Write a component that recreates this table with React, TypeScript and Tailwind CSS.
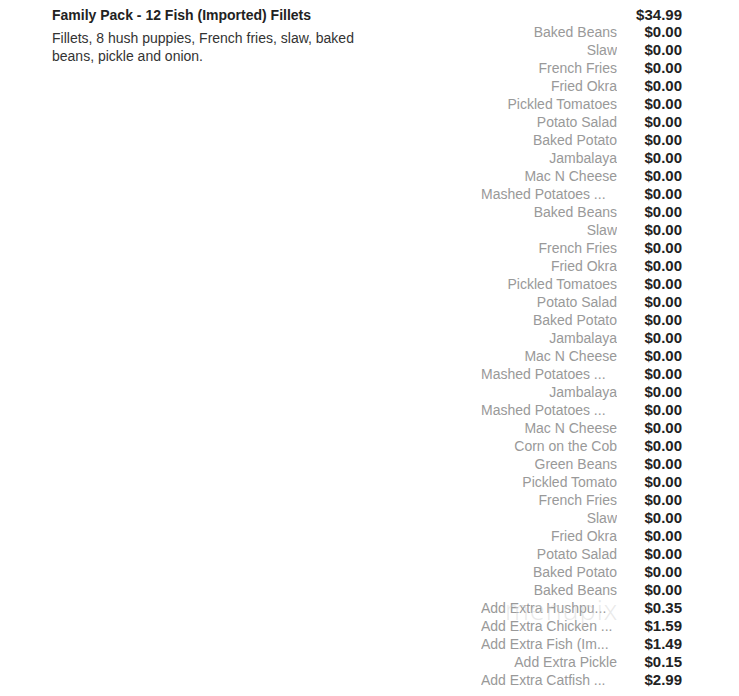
const options: { name: string; price: string; cut?: boolean }[] = [
  { name: "Baked Beans", price: "$0.00" },
  { name: "Slaw", price: "$0.00" },
  { name: "French Fries", price: "$0.00" },
  { name: "Fried Okra", price: "$0.00" },
  { name: "Pickled Tomatoes", price: "$0.00" },
  { name: "Potato Salad", price: "$0.00" },
  { name: "Baked Potato", price: "$0.00" },
  { name: "Jambalaya", price: "$0.00" },
  { name: "Mac N Cheese", price: "$0.00" },
  { name: "Mashed Potatoes ...", price: "$0.00", cut: true },
  { name: "Baked Beans", price: "$0.00" },
  { name: "Slaw", price: "$0.00" },
  { name: "French Fries", price: "$0.00" },
  { name: "Fried Okra", price: "$0.00" },
  { name: "Pickled Tomatoes", price: "$0.00" },
  { name: "Potato Salad", price: "$0.00" },
  { name: "Baked Potato", price: "$0.00" },
  { name: "Jambalaya", price: "$0.00" },
  { name: "Mac N Cheese", price: "$0.00" },
  { name: "Mashed Potatoes ...", price: "$0.00", cut: true },
  { name: "Jambalaya", price: "$0.00" },
  { name: "Mashed Potatoes ...", price: "$0.00", cut: true },
  { name: "Mac N Cheese", price: "$0.00" },
  { name: "Corn on the Cob", price: "$0.00" },
  { name: "Green Beans", price: "$0.00" },
  { name: "Pickled Tomato", price: "$0.00" },
  { name: "French Fries", price: "$0.00" },
  { name: "Slaw", price: "$0.00" },
  { name: "Fried Okra", price: "$0.00" },
  { name: "Potato Salad", price: "$0.00" },
  { name: "Baked Potato", price: "$0.00" },
  { name: "Baked Beans", price: "$0.00" },
  { name: "Add Extra Hushpu...", price: "$0.35", cut: true },
  { name: "Add Extra Chicken ...", price: "$1.59", cut: true },
  { name: "Add Extra Fish (Im...", price: "$1.49", cut: true },
  { name: "Add Extra Pickle", price: "$0.15" },
  { name: "Add Extra Catfish ...", price: "$2.99", cut: true },
];

export default function App() {
  return (
    <div className="h-[696px] w-[739px] overflow-hidden bg-white font-['Liberation_Sans',Arial,sans-serif]">
      <div className="relative flex w-[682px] justify-between pl-[52px] pt-[6px]">
        <div className="w-[310px]">
          <h3 className="text-[14px] font-bold leading-[18px] text-[#222]">Family Pack - 12 Fish (Imported) Fillets</h3>
          <p className="mt-[5px] text-[14px] leading-[18px] text-[#333]">
            Fillets, 8 hush puppies, French fries, slaw, baked beans, pickle and onion.
          </p>
        </div>
        <div className="flex flex-col">
          <div className="flex h-[17px] items-center justify-end">
            <span className="text-[15px] font-bold leading-[17px] text-[#222]">$34.99</span>
          </div>
          {options.map((option, i) => (
            <div key={`${option.name}-${i}`} className="flex h-[18px] items-center">
              <span
                className={`w-[136px] overflow-hidden whitespace-nowrap text-[14px] leading-[18px] text-[#999] ${
                  option.cut ? "text-left" : "text-right"
                }`}
              >
                {option.name}
              </span>
              <span className="w-[65px] text-right text-[15px] font-bold leading-[18px] text-[#222]">{option.price}</span>
            </div>
          ))}
        </div>
        <span className="pointer-events-none absolute left-[505px] top-[596px] font-['Open_Sans',sans-serif] text-[27px] font-light leading-[27px] tracking-[1px] text-[#d4d4d4]/50">
          menupix
        </span>
      </div>
    </div>
  );
}
